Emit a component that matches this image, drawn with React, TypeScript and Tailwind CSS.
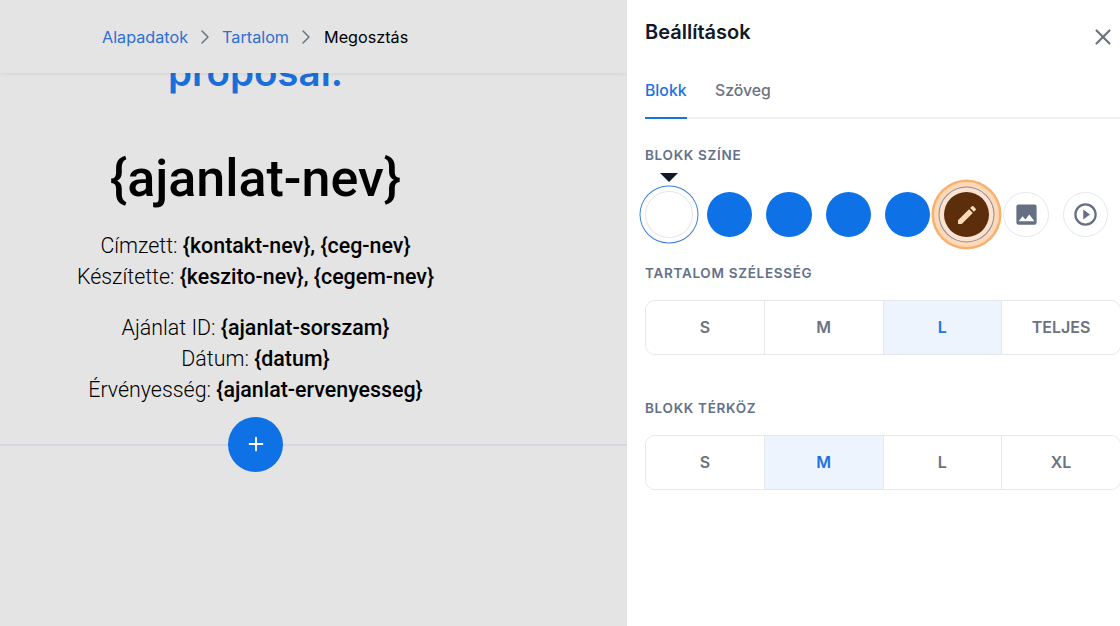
import { ChevronRight, Plus, X } from 'lucide-react';

const inter = "font-['Inter','Liberation_Sans',sans-serif]";
const roboto = "font-['Roboto','Liberation_Sans',sans-serif]";

function Segments({ items, active }: { items: string[]; active: string }) {
  return (
    <div className="flex h-[54.5px] w-[476px] rounded-[10px] border border-[#e5e7eb] overflow-hidden">
      {items.map((item, i) => (
        <div
          key={item}
          className={`flex-1 flex items-center justify-center pb-[1px] text-[16px] font-semibold ${i > 0 ? 'border-l border-[#e5e7eb]' : ''} ${
            item === active ? 'bg-[#eef4fd] text-[#1a73e0]' : 'bg-white text-[#6b7280]'
          }`}
        >
          {item}
        </div>
      ))}
    </div>
  );
}

function Label({ children, className }: { children: string; className: string }) {
  return <div className={`text-[13.5px] leading-[16px] font-semibold tracking-[0.7px] text-[#64708a] ${className}`}>{children}</div>;
}

export default function App() {
  return (
    <div className={`flex h-[626px] w-[1120px] overflow-hidden ${inter}`}>
      {/* szerkesztő */}
      <div className="w-[627px] h-full bg-[#e4e4e4] overflow-hidden">
        <div className="relative z-10 h-[73px] bg-[#e4e4e4] shadow-[0_1px_4px_rgba(0,0,0,0.08)] flex items-center pl-[102px] pt-[1px] text-[16.2px]">
          <span className="text-[#2f6fcf]">Alapadatok</span>
          <ChevronRight className="w-[24px] h-[24px] mx-[5px] text-[#6b7280]" strokeWidth={1.5} />
          <span className="text-[#2f6fcf]">Tartalom</span>
          <ChevronRight className="w-[24px] h-[24px] ml-[5px] mr-[6px] text-[#6b7280]" strokeWidth={1.5} />
          <span className="text-black">Megosztás</span>
        </div>

        <div className={`w-[511px] text-center text-black ${roboto}`}>
          <div className="h-[36px] -mt-[19px] text-[38.5px] leading-[36px] font-semibold text-[#1a6fd8] font-['Inter',sans-serif]">proposal.</div>
          <h1 className="mt-[59px] text-[52px] leading-[60px] font-medium">{'{ajanlat-nev}'}</h1>
          <div className="mt-[22px] text-[21.4px] leading-[30.7px] font-light">
            <p>Címzett: <b className="font-medium">{'{kontakt-nev}, {ceg-nev}'}</b></p>
            <p>Készítette: <b className="font-medium">{'{keszito-nev}, {cegem-nev}'}</b></p>
          </div>
          <div className="mt-[21px] text-[21.4px] leading-[30.7px] font-light">
            <p>Ajánlat ID: <b className="font-medium">{'{ajanlat-sorszam}'}</b></p>
            <p>Dátum: <b className="font-medium">{'{datum}'}</b></p>
            <p>Érvényesség: <b className="font-medium">{'{ajanlat-ervenyesseg}'}</b></p>
          </div>
        </div>

        <div className="relative mt-[38px] h-[2px] bg-[#d5d6df]">
          <div className="absolute left-[228px] -top-[27px] w-[55px] h-[55px] rounded-full bg-[#0e72e6] flex items-center justify-center text-white">
            <Plus className="w-[22px] h-[22px]" strokeWidth={2} />
          </div>
        </div>
      </div>

      {/* beállítások */}
      <div className="w-[493px] h-full bg-white pl-[18px] overflow-hidden">
        <div className="relative pt-[20px] h-[44px]">
          <h2 className="text-[20px] leading-[25px] font-semibold text-[#111827]">Beállítások</h2>
          <X className="absolute right-[4px] top-[24px] w-[26px] h-[26px] text-[#6b7280]" strokeWidth={2} />
        </div>

        <div className="mt-[18px] flex border-b-2 border-[#eef0f3] h-[57px] items-stretch text-[15.8px] font-medium">
          <div className="relative pt-[17px] text-[#1a73e0] w-[42px] whitespace-nowrap">
            Blokk
            <div className="absolute left-0 right-0 -bottom-[2px] h-[2px] bg-[#1a73e0]" />
          </div>
          <div className="ml-[28px] pt-[17px] text-[#6b7280]">Szöveg</div>
        </div>

        <Label className="mt-[28px]">BLOKK SZÍNE</Label>

        <div className="relative flex mt-[29px] ml-[1.3px] gap-[13.9px] items-center">
          <div className="absolute left-[14px] -top-[19px] w-0 h-0 border-l-[9.5px] border-r-[9.5px] border-t-[9px] border-l-transparent border-r-transparent border-t-[#111827]" />
          <div className="w-[45.4px] h-[45.4px] mr-[1.4px] rounded-full bg-white shadow-[0_0_0_1px_#e5e7eb,0_0_0_5.5px_#fff,0_0_0_6.5px_#3b7fd6]" />
          {[0, 1, 2, 3].map((i) => (
            <div key={i} className="w-[45.4px] h-[45.4px] rounded-full bg-[#0e72e6]" />
          ))}
          <div className="relative z-10 w-[45.4px] h-[45.4px] rounded-full bg-[#5c2e0b] flex items-center justify-center text-[#fdd9b8] shadow-[0_0_0_4.5px_#fde3cf,0_0_0_5.5px_#8a8aa0,0_0_0_10px_#fdd9b8,0_0_0_12.5px_#f9b06f]">
            <svg viewBox="0 0 24 24" className="w-[24px] h-[24px]" fill="currentColor">
              <path d="M3 17.25V21h3.75L17.81 9.94l-3.75-3.75L3 17.25zM20.71 7.04a1 1 0 0 0 0-1.41l-2.34-2.34a1 1 0 0 0-1.41 0l-1.83 1.83 3.75 3.75 1.83-1.83z" />
            </svg>
          </div>
          <div className="w-[45.4px] h-[45.4px] rounded-full border border-[#e5e7eb] flex items-center justify-center text-[#667085]">
            <svg viewBox="0 0 24 24" className="w-[27px] h-[27px]" fill="currentColor">
              <path d="M21 19V5a2 2 0 0 0-2-2H5a2 2 0 0 0-2 2v14a2 2 0 0 0 2 2h14a2 2 0 0 0 2-2zM8.5 13.5l2.5 3.01L14.5 12l4.5 6H5l3.5-4.5z" />
            </svg>
          </div>
          <div className="w-[45.4px] h-[45.4px] rounded-full border border-[#e5e7eb] flex items-center justify-center text-[#667085]">
            <svg viewBox="0 0 24 24" className="w-[27px] h-[27px]" fill="currentColor">
              <path d="M10 16.5l6-4.5-6-4.5v9zM12 2a10 10 0 1 0 0 20 10 10 0 0 0 0-20zm0 18a8 8 0 1 1 0-16 8 8 0 0 1 0 16z" />
            </svg>
          </div>
        </div>

        <Label className="mt-[28px]">TARTALOM SZÉLESSÉG</Label>
        <div className="mt-[19px]">
          <Segments items={['S', 'M', 'L', 'TELJES']} active="L" />
        </div>

        <Label className="mt-[45.5px]">BLOKK TÉRKÖZ</Label>
        <div className="mt-[19px]">
          <Segments items={['S', 'M', 'L', 'XL']} active="M" />
        </div>
      </div>
    </div>
  );
}
